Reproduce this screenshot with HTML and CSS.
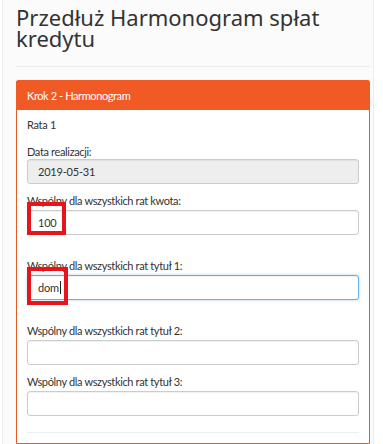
FILE: index.html
```html
<!DOCTYPE html>
<html lang="pl">
<head>
<meta charset="utf-8">
<title>Przedłuż Harmonogram spłat kredytu</title>
<link rel="stylesheet" href="styles.css">
</head>
<body>
<div class="page">
  <h1 class="title">Przedłuż Harmonogram spłat kredytu</h1>
  <hr class="title-rule">
  <div class="panel">
    <div class="panel-heading">Krok 2 - Harmonogram</div>
    <div class="panel-body">
      <div class="rata">Rata 1</div>
      <div class="group">
        <label class="label label-tight">Data realizacji:</label>
        <div class="input input-disabled">2019-05-31</div>
      </div>
      <div class="group group-help">
        <label class="label">Wspólny dla wszystkich rat kwota:</label>
        <div class="input">100</div>
        <div class="mark mark-1"></div>
      </div>
      <div class="group group-help">
        <label class="label">Wspólny dla wszystkich rat tytuł 1:</label>
        <div class="input input-focus">dom<span class="caret"></span></div>
        <div class="mark mark-2"></div>
      </div>
      <div class="group">
        <label class="label">Wspólny dla wszystkich rat tytuł 2:</label>
        <div class="input"></div>
      </div>
      <div class="group">
        <label class="label">Wspólny dla wszystkich rat tytuł 3:</label>
        <div class="input"></div>
      </div>
      <hr class="body-rule">
    </div>
  </div>
</div>
</body>
</html>
```
FILE: styles.css
```css
html, body {
  margin: 0;
  padding: 0;
  background: #ffffff;
}
body {
  font-family: "Lato", "Noto Sans", sans-serif;
  color: #333333;
  width: 383px;
  height: 444px;
  overflow: hidden;
}
.page {
  margin: 0 9px 0 2px;
  border-left: 1px solid #ececec;
  border-right: 1px solid #ececec;
  background: #fbfbfb;
  padding: 7px 3px 0 13px;
  height: 444px;
  box-sizing: border-box;
}
.title {
  margin: 0;
  font-family: "Noto Sans", "DejaVu Sans", sans-serif;
  font-size: 22px;
  line-height: 21px;
  font-weight: 400;
  color: #333333;
  width: 330px;
}
.title-rule {
  border: 0;
  border-top: 1px solid #ececec;
  margin: 17px 0 13px 0;
}
.panel {
  border: 1px solid #e65a24;
  border-radius: 3px 3px 0 0;
  background: #ffffff;
}
.panel-heading {
  background: #f15a24;
  color: #ffffff;
  font-size: 11px;
  letter-spacing: -0.4px;
  line-height: 29px;
  height: 29px;
  padding: 0 10px;
  margin: -1px -1px 0 -1px;
  border-radius: 3px 3px 0 0;
  border: 1px solid #f15a24;
  border-bottom: 0;
}
.panel-body {
  padding: 7px 10px 10px 10px;
}
.rata {
  font-size: 11px;
  letter-spacing: -0.3px;
  line-height: 16px;
  margin-bottom: 11px;
}
.group {
  position: relative;
  margin-bottom: 9px;
}
.group-help {
  margin-bottom: 23px;
}
.label {
  display: block;
  font-size: 11px;
  letter-spacing: -0.35px;
  line-height: 16px;
  margin-bottom: 1px;
  color: #333333;
}
.label-tight {
  margin-bottom: -1px;
}
.input {
  box-sizing: border-box;
  height: 25px;
  border: 1px solid #cccccc;
  border-radius: 3px;
  background: #ffffff;
  font-size: 11px;
  letter-spacing: -0.2px;
  line-height: 23px;
  padding: 0 10px;
  color: #333333;
  box-shadow: inset 0 1px 1px rgba(0, 0, 0, 0.06);
}
.input-disabled {
  background: #eeeeee;
}
.input-focus {
  border-color: #66afe9;
  box-shadow: inset 0 1px 1px rgba(0, 0, 0, 0.06), 0 0 3px rgba(102, 175, 233, 0.6);
}
.caret {
  display: inline-block;
  width: 1px;
  height: 13px;
  background: #222222;
  vertical-align: -2px;
  margin-left: 1px;
}
.mark {
  position: absolute;
  border: 4px solid #e8141c;
  box-sizing: border-box;
}
.mark-1 {
  left: 0;
  top: 9px;
  width: 39px;
  height: 33px;
}
.mark-2 {
  left: 0;
  top: 9px;
  width: 41px;
  height: 38px;
}
.body-rule {
  border: 0;
  border-top: 1px solid #eeeeee;
  margin: 16px 0 0 0;
}
```
